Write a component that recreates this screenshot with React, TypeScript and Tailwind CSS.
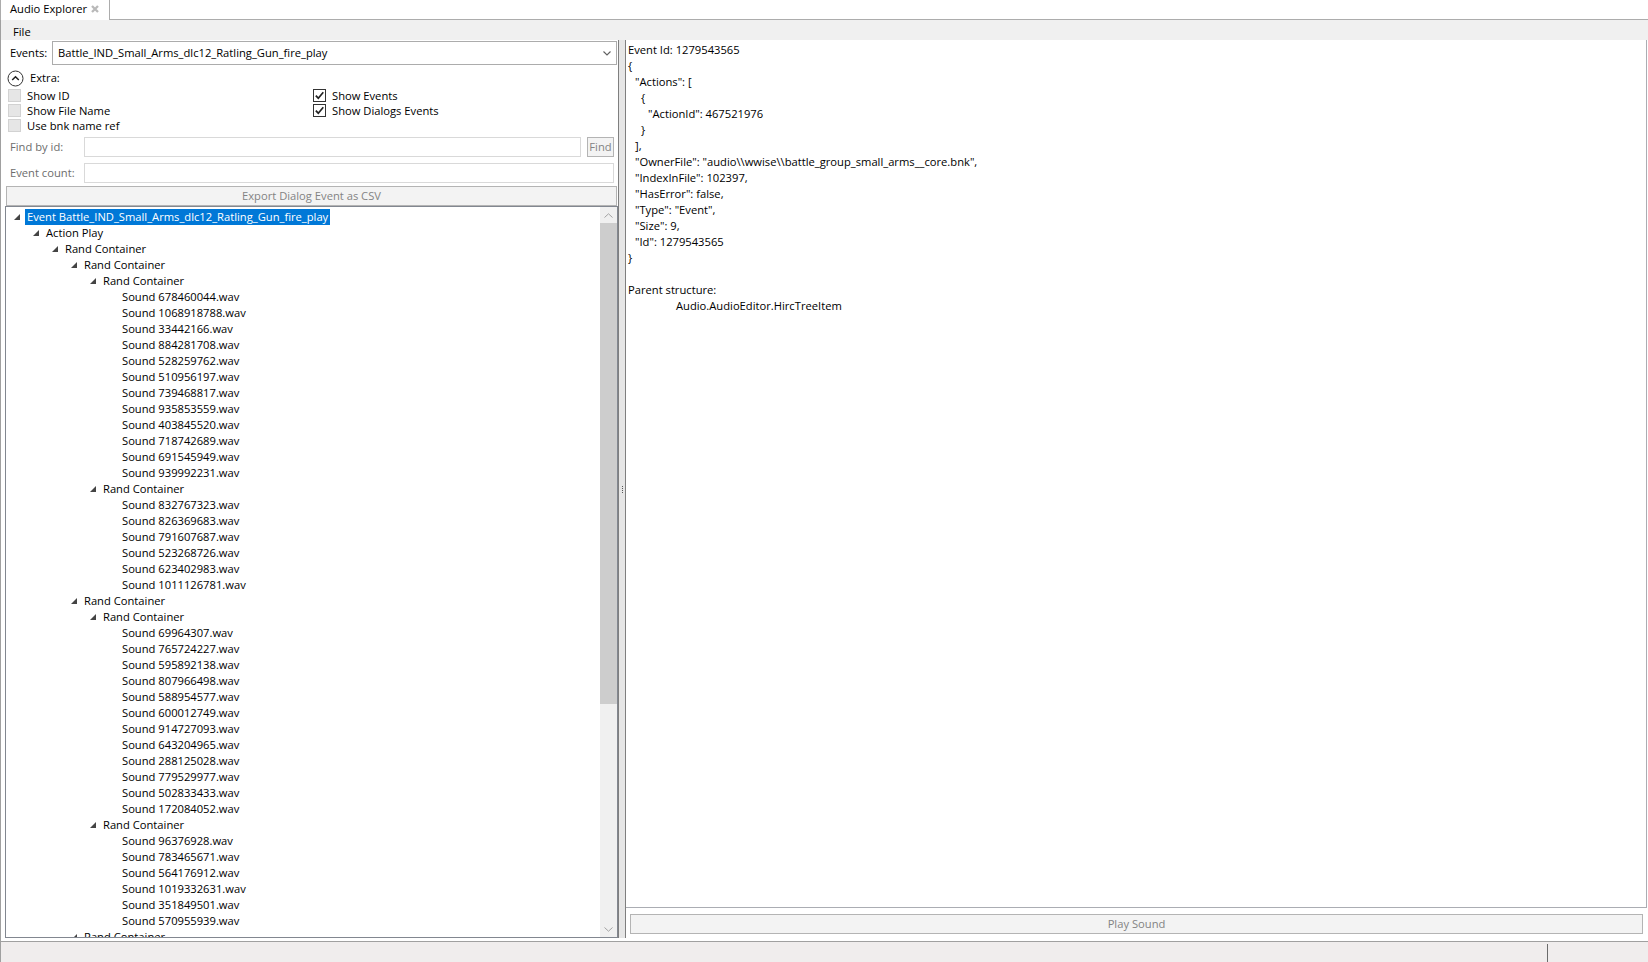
import React from "react";

// --- datos del árbol ---

type Node = { level: number; text: string; open?: boolean; selected?: boolean };

const snd = (ids: string[]): Node[] =>
  ids.map((id) => ({ level: 5, text: `Sound ${id}.wav` }));

const treeRows: Node[] = [
  { level: 0, text: "Event Battle_IND_Small_Arms_dlc12_Ratling_Gun_fire_play", open: true, selected: true },
  { level: 1, text: "Action Play", open: true },
  { level: 2, text: "Rand Container", open: true },
  { level: 3, text: "Rand Container", open: true },
  { level: 4, text: "Rand Container", open: true },
  ...snd([
    "678460044", "1068918788", "33442166", "884281708", "528259762", "510956197",
    "739468817", "935853559", "403845520", "718742689", "691545949", "939992231",
  ]),
  { level: 4, text: "Rand Container", open: true },
  ...snd(["832767323", "826369683", "791607687", "523268726", "623402983", "1011126781"]),
  { level: 3, text: "Rand Container", open: true },
  { level: 4, text: "Rand Container", open: true },
  ...snd([
    "69964307", "765724227", "595892138", "807966498", "588954577", "600012749",
    "914727093", "643204965", "288125028", "779529977", "502833433", "172084052",
  ]),
  { level: 4, text: "Rand Container", open: true },
  ...snd(["96376928", "783465671", "564176912", "1019332631", "351849501", "570955939"]),
  { level: 3, text: "Rand Container", open: true },
];

const indent = ["pl-[8px]", "pl-[27px]", "pl-[46px]", "pl-[65px]", "pl-[84px]", "pl-[103px]"];

const jsonLines: { pad: string; text: string }[] = [
  { pad: "pl-0", text: "Event Id: 1279543565" },
  { pad: "pl-0", text: "{" },
  { pad: "pl-[7px]", text: '"Actions": [' },
  { pad: "pl-[13px]", text: "{" },
  { pad: "pl-[20px]", text: '"ActionId": 467521976' },
  { pad: "pl-[13px]", text: "}" },
  { pad: "pl-[7px]", text: "]," },
  { pad: "pl-[7px]", text: '"OwnerFile": "audio\\\\wwise\\\\battle_group_small_arms__core.bnk",' },
  { pad: "pl-[7px]", text: '"IndexInFile": 102397,' },
  { pad: "pl-[7px]", text: '"HasError": false,' },
  { pad: "pl-[7px]", text: '"Type": "Event",' },
  { pad: "pl-[7px]", text: '"Size": 9,' },
  { pad: "pl-[7px]", text: '"Id": 1279543565' },
  { pad: "pl-0", text: "}" },
  { pad: "pl-0", text: "" },
  { pad: "pl-0", text: "Parent structure:" },
  { pad: "pl-[48px]", text: "Audio.AudioEditor.HircTreeItem" },
];

// --- piezas pequeñas ---

const Arrow = () => (
  <svg width="6" height="6" viewBox="0 0 6 6" className="block">
    <polygon points="6,0 6,6 0,6" fill="#444444" />
  </svg>
);

const CheckBox = ({ checked = false }: { checked?: boolean }) =>
  checked ? (
    <div className="w-[13px] h-[13px] border border-[#333333] bg-white flex items-center justify-center">
      <svg width="11" height="11" viewBox="0 0 11 11">
        <path d="M1.8 5.6 L4.3 8.2 L9.3 2.3" stroke="#222222" strokeWidth="1.7" fill="none" />
      </svg>
    </div>
  ) : (
    <div className="w-[13px] h-[13px] border border-[#d2d2d2] bg-[#e6e6e6]" />
  );

const CheckRow = ({ label, checked }: { label: string; checked?: boolean }) => (
  <div className="flex items-center gap-[6px]">
    <CheckBox checked={checked} />
    <span>{label}</span>
  </div>
);

const GrayButton = ({ label, className = "" }: { label: string; className?: string }) => (
  <div
    className={`h-[20px] border border-[#b4b4b4] bg-[#f3f3f3] text-[#838383] flex items-center justify-center ${className}`}
  >
    {label}
  </div>
);

const TreeRow = ({ node }: { node: Node }) => (
  <div className={`flex items-center h-[16px] shrink-0 ${indent[node.level]}`}>
    <div className="w-[11px] flex items-center">{node.open && <Arrow />}</div>
    <span
      className={`px-[2px] leading-[16px] whitespace-nowrap ${
        node.selected ? "bg-[#0078d7] text-white" : "text-black"
      }`}
    >
      {node.text}
    </span>
  </div>
);

export default function App() {
  return (
    <div className="w-[1648px] h-[962px] bg-white flex flex-col overflow-hidden text-[11.2px] leading-[16px] text-black font-['Open_Sans',sans-serif]">
      {/* pestaña */}
      <div className="h-[20px] flex shrink-0">
        <div className="w-[110px] h-[20px] border-l border-r border-[#acacac] bg-white flex items-center pl-[9px] pb-[2px]">
          <span>Audio Explorer</span>
          <svg width="8" height="8" viewBox="0 0 8 8" className="ml-[4px]">
            <path d="M1 1 L7 7 M7 1 L1 7" stroke="#b9b9b9" strokeWidth="2.3" />
          </svg>
        </div>
        <div className="flex-1 border-b border-[#acacac]" />
      </div>

      <div className="flex-1 flex flex-col border-l border-[#a0a0a0] min-h-0">
        {/* menú */}
        <div className="h-[20px] bg-[#f0f0f0] flex items-center pl-[12px] pt-[3px] shrink-0">File</div>

        <div className="flex-1 flex min-h-0">
          {/* panel izquierdo */}
          <div className="w-[617px] flex flex-col pb-[3px]">
            <div className="h-[26px] pt-[1px] flex items-start pl-[9px] shrink-0">
              <span className="w-[42px] h-[24px] flex items-center">Events:</span>
              <div className="w-[565px] h-[24px] border border-[#acacac] bg-white flex items-center pl-[5px] pr-[5px]">
                <span className="flex-1">Battle_IND_Small_Arms_dlc12_Ratling_Gun_fire_play</span>
                <svg width="8" height="5" viewBox="0 0 8 5">
                  <path d="M0.5 0.5 L4 4 L7.5 0.5" stroke="#606060" strokeWidth="1.1" fill="none" />
                </svg>
              </div>
            </div>

            <div className="mt-[4px] h-[16px] flex items-center pl-[6px] shrink-0">
              <svg width="17" height="17" viewBox="0 0 17 17">
                <circle cx="8.5" cy="8.5" r="7.5" stroke="#333333" strokeWidth="1" fill="white" />
                <path d="M5.2 10 L8.5 6.7 L11.8 10" stroke="#222222" strokeWidth="1.5" fill="none" />
              </svg>
              <span className="ml-[6px]">Extra:</span>
            </div>

            <div className="mt-[2px] grid grid-cols-[305px_1fr] auto-rows-[15px] pl-[7px] shrink-0">
              <CheckRow label="Show ID" />
              <CheckRow label="Show Events" checked />
              <CheckRow label="Show File Name" />
              <CheckRow label="Show Dialogs Events" checked />
              <CheckRow label="Use bnk name ref" />
              <div />
            </div>

            <div className="mt-[4px] h-[20px] flex items-center pl-[9px] shrink-0">
              <span className="w-[74px] text-[#6d6d6d]">Find by id:</span>
              <div className="w-[497px] h-[20px] border border-[#d9d9d9] bg-white" />
              <GrayButton label="Find" className="ml-[6px] w-[27px]" />
            </div>

            <div className="mt-[6px] h-[20px] flex items-center pl-[9px] shrink-0">
              <span className="w-[74px] text-[#6d6d6d]">Event count:</span>
              <div className="w-[530px] h-[20px] border border-[#d9d9d9] bg-white" />
            </div>

            <div className="mt-[3px] pl-[5px] shrink-0">
              <GrayButton label="Export Dialog Event as CSV" className="w-[611px]" />
            </div>

            {/* árbol */}
            <div className="ml-[4px] w-[613px] flex-1 border border-[#828790] flex min-h-0">
              <div className="flex-1 flex flex-col pt-[2px] overflow-hidden">
                {treeRows.map((n, i) => (
                  <TreeRow key={i} node={n} />
                ))}
              </div>
              <div className="w-[17px] bg-[#f0f0f0] flex flex-col">
                <div className="h-[16px] flex items-center justify-center">
                  <svg width="9" height="5" viewBox="0 0 9 5">
                    <path d="M0.5 4.5 L4.5 0.8 L8.5 4.5" stroke="#a3a3a3" strokeWidth="1" fill="none" />
                  </svg>
                </div>
                <div className="h-[481px] bg-[#cdcdcd]" />
                <div className="flex-1" />
                <div className="h-[16px] flex items-center justify-center">
                  <svg width="9" height="5" viewBox="0 0 9 5">
                    <path d="M0.5 0.5 L4.5 4.2 L8.5 0.5" stroke="#a3a3a3" strokeWidth="1" fill="none" />
                  </svg>
                </div>
              </div>
            </div>
          </div>

          {/* separador */}
          <div className="w-[8px] mb-[3px] border-l border-r border-[#7f7f7f] bg-[#e6e6e6] flex flex-col items-center justify-center gap-[1px]">
            <div className="w-[1px] h-[1px] bg-[#555555]" />
            <div className="w-[1px] h-[1px] bg-[#555555]" />
            <div className="w-[1px] h-[1px] bg-[#555555]" />
            <div className="w-[1px] h-[1px] bg-[#555555]" />
          </div>

          {/* panel derecho */}
          <div className="flex-1 flex flex-col">
            <div className="flex-1 mr-[1px] border-r border-b border-[#abadb3] pl-[2px] pt-[2px]">
              {jsonLines.map((l, i) => (
                <div key={i} className={`h-[16px] whitespace-pre ${l.pad}`}>
                  {l.text}
                </div>
              ))}
            </div>
            <div className="h-[33px] pt-[6px] pl-[4px] pr-[5px] shrink-0">
              <GrayButton label="Play Sound" className="w-full" />
            </div>
          </div>
        </div>

        {/* barra de estado */}
        <div className="h-[21px] border-t border-[#a0a0a0] bg-[#f0eded] flex shrink-0">
          <div className="w-[1546px]" />
          <div className="mt-[2px] w-[1px] bg-[#6b6b6b]" />
        </div>
      </div>
    </div>
  );
}
